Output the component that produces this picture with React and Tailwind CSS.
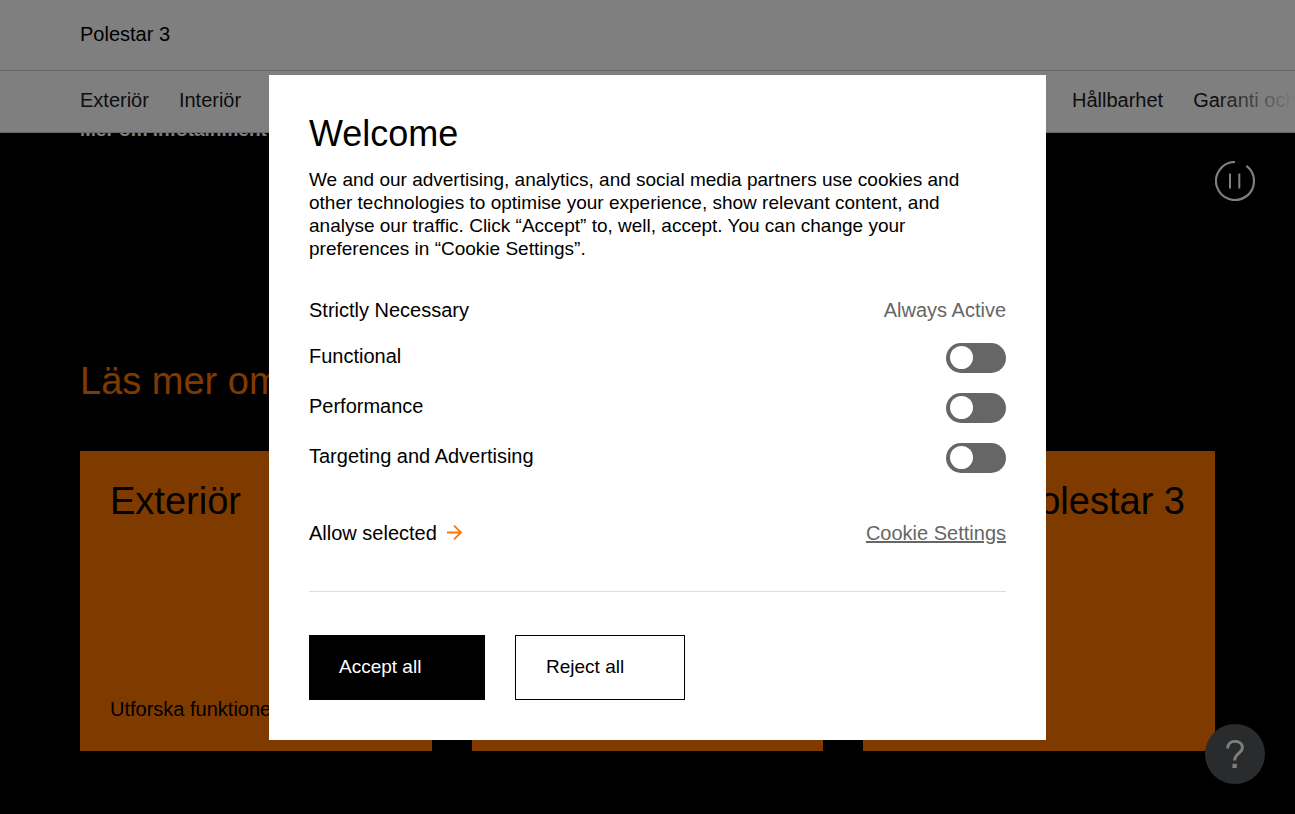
import React from "react";

const toggles = [
  { id: "functional", label: "Functional" },
  { id: "performance", label: "Performance" },
  { id: "targeting", label: "Targeting and Advertising" },
];

const cards = [
  { title: "Exteriör", link: "Utforska funktionerna", align: "text-left" },
  { title: "Interiör", link: "", align: "text-left" },
  { title: "Köp Polestar 3", link: "", align: "text-right" },
];

function Header() {
  return (
    <header className="relative z-10 bg-white text-black">
      <div className="flex h-[71px] items-center border-b border-[#d2d2d2] px-20 pb-0.5">
        <a href="#top">Polestar 3</a>
      </div>
      <nav className="relative flex h-[62px] items-center justify-between overflow-hidden border-b border-[#d2d2d2] pl-20 pb-1 text-[#1a1a1a]">
        <div className="flex gap-[30px]">
          <a href="#exterior">Exteriör</a>
          <a href="#interior">Interiör</a>
        </div>
        <div className="flex w-[223px] gap-[30px] whitespace-nowrap">
          <a href="#hallbarhet">Hållbarhet</a>
          <a href="#garanti">Garanti och service</a>
        </div>
        <div className="absolute inset-y-0 right-0 w-20 bg-linear-to-r from-white/0 to-white" />
      </nav>
    </header>
  );
}

function Hero() {
  return (
    <section className="flex h-[214px] items-start justify-between bg-linear-to-b from-[#020206] to-black to-50% pr-10 pl-20">
      <a href="#infotainment" className="-mt-[15px] text-[19px] font-bold text-white">
        Mer om infotainment
      </a>
      <button type="button" aria-label="Pausa" className="mt-7 text-white">
        <svg width="40" height="40" viewBox="0 0 40 40" fill="none" stroke="currentColor">
          <path d="M20 1A19 19 0 1 0 31.4 4.8" strokeWidth="2.2" />
          <path d="M15 12.5V27.5M24.3 12.5V27.5" strokeWidth="2" />
        </svg>
      </button>
    </section>
  );
}

function CookieDialog() {
  return (
    <div
      role="dialog"
      aria-modal="true"
      aria-labelledby="welcome"
      className="w-full max-w-[777px] bg-white p-10 text-black"
    >
      <h2 id="welcome" className="text-[36px] leading-[38px]">Welcome</h2>
      <p className="mt-[15px] text-[19px] leading-[23px]">
        We and our advertising, analytics, and social media partners use cookies and other technologies to optimise your
        experience, show relevant content, and analyse our traffic. Click “Accept” to, well, accept. You can change your
        preferences in “Cookie Settings”.
      </p>
      <div className="mt-[35px] flex h-[38px] items-center justify-between pb-2">
        <span>Strictly Necessary</span>
        <span className="text-[#666]">Always Active</span>
      </div>
      {toggles.map((t) => (
        <div key={t.id} className="flex h-[50px] items-center justify-between">
          <label htmlFor={t.id} className="pb-1">{t.label}</label>
          <input
            id={t.id}
            type="checkbox"
            role="switch"
            className="flex h-[30px] w-[60px] appearance-none items-center rounded-full bg-[#666] pl-1 before:size-[23px] before:rounded-full before:bg-white checked:justify-end checked:pr-1"
          />
        </div>
      ))}
      <div className="mt-[34px] flex h-8 items-center justify-between">
        <button type="button" className="flex items-center gap-2.5">
          Allow selected
          <svg width="16" height="16" viewBox="0 0 16 16" fill="none" stroke="#ff7500" strokeWidth="1.8">
            <path d="M0 7.500H14.500M7 0.700L14 7.500L7 14.300" />
          </svg>
        </button>
        <a href="#settings" className="text-[#666] underline">Cookie Settings</a>
      </div>
      <hr className="mt-[42px] border-[#ddd]" />
      <div className="mt-[43px] flex gap-[30px] text-[19px]">
        <button type="button" className="h-[65px] w-[176px] bg-black pl-[30px] text-left text-white">
          Accept all
        </button>
        <button type="button" className="h-[65px] w-[170px] border border-black pl-[30px] text-left">
          Reject all
        </button>
      </div>
    </div>
  );
}

export default function App() {
  return (
    <div className="h-screen overflow-hidden bg-black font-['Liberation_Sans',Arial,sans-serif] text-[20px] leading-6">
      <Header />
      <Hero />
      <main className="px-20">
        <h1 className="pt-3 text-[38px] leading-[44px] text-[#ff7500]">Läs mer om Polestar 3</h1>
        <div className="mt-12 grid grid-cols-3 gap-10">
          {cards.map((c) => (
            <article key={c.title} className="flex h-[300px] flex-col justify-between bg-[#ff7500] p-[30px] text-black">
              <h2 className={`text-[38px] leading-10 whitespace-nowrap ${c.align}`}>{c.title}</h2>
              {c.link && <a href="#exterior">{c.link}</a>}
            </article>
          ))}
        </div>
      </main>
      <button
        type="button"
        aria-label="Hjälp"
        className="fixed right-[30px] bottom-[30px] flex size-[60px] items-center justify-center rounded-full bg-[#55575b] text-white"
      >
        <svg width="20" height="30" viewBox="0 0 20 30" fill="none" stroke="currentColor" strokeWidth="2.9">
          <path d="M2.600 9.500C2.600 5 5.500 2.400 10 2.400S17.400 5 17.400 8.800C17.400 14 9.600 14.500 9.600 21.500" />
          <path d="M9.600 24.800V29" strokeWidth="4.300" />
        </svg>
      </button>
      <div className="fixed inset-0 z-20 flex items-center justify-center bg-black/50 pl-5">
        <CookieDialog />
      </div>
    </div>
  );
}
